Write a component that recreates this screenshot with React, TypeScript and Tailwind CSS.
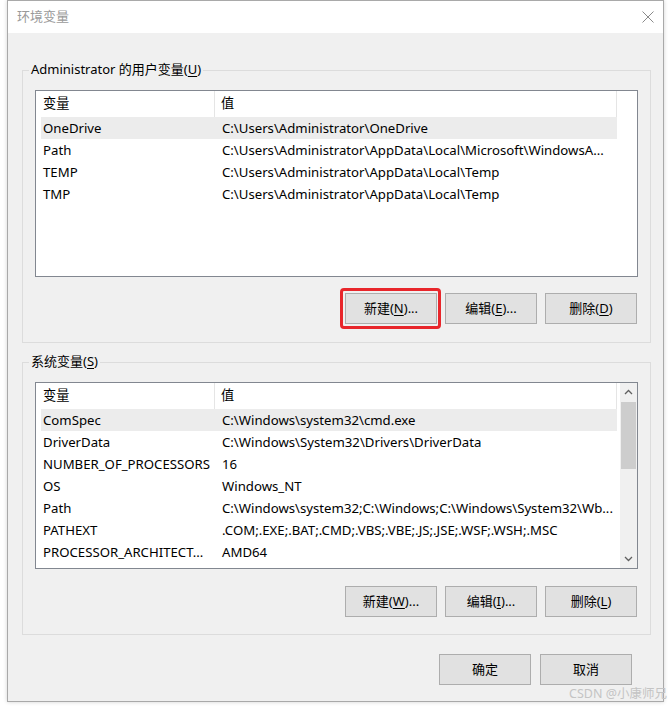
import React from "react";

const FONT = '"Noto Sans", "Noto Sans CJK SC", sans-serif';

const userVars: [string, string][] = [
  ["OneDrive", "C:\\Users\\Administrator\\OneDrive"],
  ["Path", "C:\\Users\\Administrator\\AppData\\Local\\Microsoft\\WindowsA..."],
  ["TEMP", "C:\\Users\\Administrator\\AppData\\Local\\Temp"],
  ["TMP", "C:\\Users\\Administrator\\AppData\\Local\\Temp"],
];

const sysVars: [string, string][] = [
  ["ComSpec", "C:\\Windows\\system32\\cmd.exe"],
  ["DriverData", "C:\\Windows\\System32\\Drivers\\DriverData"],
  ["NUMBER_OF_PROCESSORS", "16"],
  ["OS", "Windows_NT"],
  ["Path", "C:\\Windows\\system32;C:\\Windows;C:\\Windows\\System32\\Wb..."],
  ["PATHEXT", ".COM;.EXE;.BAT;.CMD;.VBS;.VBE;.JS;.JSE;.WSF;.WSH;.MSC"],
  ["PROCESSOR_ARCHITECT...", "AMD64"],
];

function Btn({
  label,
  mn,
  suffix,
  red,
}: {
  label: string;
  mn?: string;
  suffix?: string;
  red?: boolean;
}) {
  return (
    <div className="relative">
      <div className="w-[92px] h-[31px] bg-[#e1e1e1] border border-[#adadad] flex items-center justify-center text-[13px] text-black whitespace-nowrap">
        <span>{label}</span>
        {mn && (
          <>
            <span>(</span>
            <span className="underline underline-offset-2">{mn}</span>
            <span>)</span>
          </>
        )}
        {suffix && <span>{suffix}</span>}
      </div>
      {red && (
        <div className="absolute -left-[5px] -right-[4px] -top-[5px] -bottom-[5px] border-[3px] border-[#e8262b] rounded-[4px]" />
      )}
    </div>
  );
}

function ListView({
  rows,
  scroll,
}: {
  rows: [string, string][];
  scroll?: boolean;
}) {
  return (
    <div className="h-[187px] border border-[#828790] bg-white flex">
      <div className="flex-1 flex flex-col">
        <div className="h-[26px] flex text-[13.2px] text-black">
          <div className="w-[179px] pl-[7px] flex items-center border-r border-[#e5e5e5]">
            变量
          </div>
          <div className="w-[402px] pl-[6px] flex items-center border-r border-[#e5e5e5]">
            值
          </div>
        </div>
        {rows.map(([k, v], i) => (
          <div
            key={k + i}
            className={`h-[22px] ml-[5px] w-[576px] pt-[2px] flex items-center text-[13.2px] text-black whitespace-nowrap ${
              i === 0 ? "bg-[#ececec]" : ""
            }`}
          >
            <div className="w-[174px] pl-[2px] overflow-hidden">{k}</div>
            <div className="w-[402px] pl-[7px] overflow-hidden">{v}</div>
          </div>
        ))}
      </div>
      {scroll && (
        <div className="w-[17px] bg-[#f0f0f0] flex flex-col items-center">
          <div className="h-[18px] w-full flex items-center justify-center">
            <svg width="9" height="6" viewBox="0 0 9 6">
              <path d="M1 5 L4.5 1.5 L8 5" fill="none" stroke="#606060" strokeWidth="1.3" />
            </svg>
          </div>
          <div className="mt-[1px] w-[15px] h-[67px] bg-[#cdcdcd]" />
          <div className="flex-1" />
          <div className="h-[18px] w-full flex items-center justify-center">
            <svg width="9" height="6" viewBox="0 0 9 6">
              <path d="M1 1 L4.5 4.5 L8 1" fill="none" stroke="#606060" strokeWidth="1.3" />
            </svg>
          </div>
        </div>
      )}
    </div>
  );
}

function Group({
  title,
  mn,
  children,
  className,
}: {
  title: string;
  mn: string;
  children: React.ReactNode;
  className?: string;
}) {
  return (
    <div className={`relative border border-[#dcdcdc] px-[12px] pt-[19px] ${className ?? ""}`}>
      <div className="absolute left-[6px] -top-[10px] h-[18px] px-[2px] bg-[#f0f0f0] flex items-center text-[13px] text-black whitespace-nowrap">
        <span>{title}(</span>
        <span className="underline underline-offset-2">{mn}</span>
        <span>)</span>
      </div>
      {children}
    </div>
  );
}

export default function App() {
  return (
    <div
      className="w-[672px] h-[709px] bg-white relative overflow-hidden"
      style={{ fontFamily: FONT }}
    >
      <div className="ml-[7px] w-[657px] h-[702px] border border-[#a9a9a9] bg-[#f0f0f0] flex flex-col shadow-[0_0_4px_rgba(0,0,0,0.18)]">
        <div className="h-[32px] bg-white flex items-center justify-between pl-[9px] pr-[9px]">
          <span className="text-[13px] text-[#9a9a9a]">环境变量</span>
          <svg width="12" height="12" viewBox="0 0 12 12">
            <path d="M0.5 0.5 L11.5 11.5 M11.5 0.5 L0.5 11.5" stroke="#8a8a8a" strokeWidth="1" />
          </svg>
        </div>
        <div className="flex-1 flex flex-col pl-[14px] pr-[12px] pt-[37px]">
          <Group title="Administrator 的用户变量" mn="U" className="pb-[18px]">
            <ListView rows={userVars} />
            <div className="mt-[16px] flex justify-end gap-[8px] pr-[1px]">
              <Btn label="新建" mn="N" suffix="..." red />
              <Btn label="编辑" mn="E" suffix="..." />
              <Btn label="删除" mn="D" />
            </div>
          </Group>
          <Group title="系统变量" mn="S" className="mt-[19px] pb-[17px]">
            <ListView rows={sysVars} scroll />
            <div className="mt-[17px] flex justify-end gap-[8px] pr-[1px]">
              <Btn label="新建" mn="W" suffix="..." />
              <Btn label="编辑" mn="I" suffix="..." />
              <Btn label="删除" mn="L" />
            </div>
          </Group>
          <div className="mt-[19px] pr-[19px] flex justify-end gap-[9px]">
            <Btn label="确定" />
            <Btn label="取消" />
          </div>
        </div>
      </div>
      <div className="absolute right-[5px] bottom-[7px] text-[12.5px] text-[#c4c4c4] leading-[16px]">
        CSDN @小康师兄
      </div>
    </div>
  );
}
